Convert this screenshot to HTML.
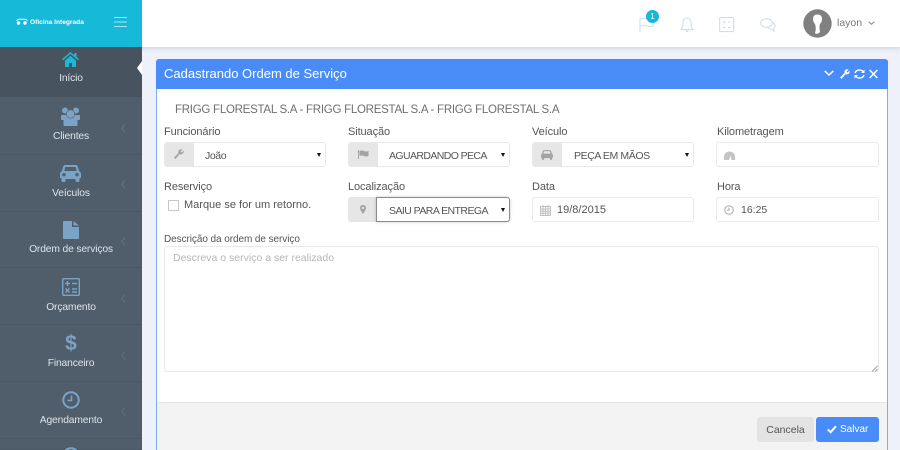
<!DOCTYPE html>
<html><head><meta charset="utf-8"><style>
*{box-sizing:border-box}
html,body{margin:0;padding:0;width:900px;height:450px;overflow:hidden;background:#eef1fa;font-family:"Liberation Sans",sans-serif;color:#555}
#p{position:relative;width:900px;height:450px;overflow:hidden;background:#eef1fa}
.a{position:absolute;white-space:nowrap}
.m{position:absolute;left:0;width:142px;background:#505e6c;border-bottom:1px solid #4a5865}
.ml{position:absolute;left:0;width:142px;text-align:center;color:#dde3e8;font-size:10.300px;letter-spacing:-.15px;white-space:nowrap}
.lab{position:absolute;font-size:11px;color:#555;letter-spacing:-.1px;white-space:nowrap}
.box{position:absolute;height:25px;background:#fff;border:1px solid #e9e9e9;border-radius:3px}
.ad{position:absolute;left:0;top:0;bottom:0;width:29px;background:#e6e6e6;border-radius:2px 0 0 2px}
.tx{position:absolute;font-size:10.500px;letter-spacing:-.4px;color:#555;white-space:nowrap}
.ar{position:absolute;width:0;height:0;border-left:2.5px solid transparent;border-right:2.5px solid transparent;border-top:4px solid #111}
svg{position:absolute;overflow:visible}
</style></head><body><div id="p">

<!-- header -->
<div class="a" style="left:0;top:0;width:900px;height:47px;background:#fff;box-shadow:0 1px 5px rgba(120,120,140,.3)"></div>

<!-- sidebar -->
<div class="a" style="left:0;top:0;width:142px;height:47px;background:#17b9d8"></div>
<svg style="left:16px;top:18px" width="12" height="8" viewBox="0 0 12 8"><path d="M.5 2.500Q3 .5 6 1.500Q9 .5 11.500 2.500" fill="none" stroke="#fff" stroke-width="1"/><circle cx="2.500" cy="5" r="1.700" fill="#fff"/><circle cx="9" cy="5" r="1.700" fill="#fff"/></svg>
<div class="a" style="left:30px;top:18px;font-size:6.600px;line-height:10px;font-weight:bold;color:#fff">Oficina Integrada</div>
<svg style="left:114px;top:17px" width="13" height="10"><path d="M0 .5H13M0 5H13M0 9.500H13" stroke="#a5e5f1" stroke-width="1"/></svg>

<div class="m" style="top:47px;height:50px;background:#47535f;border:0"></div>
<div class="m" style="top:97px;height:58px"></div>
<div class="m" style="top:155px;height:57px"></div>
<div class="m" style="top:212px;height:56px"></div>
<div class="m" style="top:268px;height:57px"></div>
<div class="m" style="top:325px;height:57px"></div>
<div class="m" style="top:382px;height:57px"></div>
<div class="m" style="top:439px;height:11px"></div>
<div class="a" style="left:137px;top:61px;width:0;height:0;border-top:7px solid transparent;border-bottom:7px solid transparent;border-right:5px solid #fff"></div>

<!-- home -->
<svg style="left:62px;top:52px" width="17" height="15" viewBox="0 0 17 15"><path d="M8.500 0L12.500 3.200V1H14.500V4.900L17 7L16 8.200L8.500 2L1 8.200L0 7Z" fill="#1cb9d6"/><path d="M3 8.500L8.500 3.800L14 8.500V15H10V11H7V15H3Z" fill="#1cb9d6"/></svg>
<div class="ml" style="top:73px">Início</div>
<!-- users -->
<svg style="left:61px;top:107px" width="20" height="19" viewBox="0 0 20 19" fill="#7ba3c6"><circle cx="4" cy="3.500" r="3"/><circle cx="15" cy="3.500" r="3"/><path d="M1 8H18Q19 8 19 9V12Q19 13 18 13H1Q0 13 0 12V9Q0 8 1 8Z"/><circle cx="9.500" cy="7" r="4.200" stroke="#505e6c" stroke-width=".6"/><path d="M4 11.500H15Q16.500 11.500 16.500 13V18Q16.500 19 15.500 19H3.500Q2.500 19 2.500 18V13Q2.500 11.500 4 11.500Z"/></svg>
<div class="ml" style="top:131px">Clientes</div>
<!-- car -->
<svg style="left:60px;top:165px" width="21" height="17" viewBox="0 0 21 17" fill="#7ba3c6"><path d="M5 0H16Q17.300 0 18 2L19 6Q21 7 21 9V13H19.500V15.500Q19.500 17 18 17H17Q15.500 17 15.500 15.500V14H5.500V15.500Q5.500 17 4 17H3Q1.500 17 1.500 15.500V13H0V9Q0 7 2 6L3 2Q3.700 0 5 0ZM5.200 2L4.400 6H16.600L15.800 2ZM4 8A1.700 1.700 0 1 0 4 11.400A1.700 1.700 0 1 0 4 8ZM17 8A1.700 1.700 0 1 0 17 11.400A1.700 1.700 0 1 0 17 8Z" fill-rule="evenodd"/></svg>
<div class="ml" style="top:188px">Veículos</div>
<!-- file -->
<svg style="left:63px;top:221px" width="16" height="18" viewBox="0 0 16 18" fill="#7ba3c6"><path d="M0 1Q0 0 1 0H9V6H16V17Q16 18 15 18H1Q0 18 0 17ZM10.500 0L16 4.500H10.500Z"/></svg>
<div class="ml" style="top:244px">Ordem de serviços</div>
<!-- calc -->
<svg style="left:62px;top:278px" width="18" height="18" viewBox="0 0 18 18" fill="none" stroke="#7ba3c6" stroke-width="1.400"><rect x=".7" y=".7" width="16.600" height="16.600" rx="1"/><path d="M3 5.500H8M5.500 3V8M10 5.500H15M3.500 10.500L7.500 14.500M7.500 10.500L3.500 14.500M10 11H15M10 14H15"/></svg>
<div class="ml" style="top:302px">Orçamento</div>
<!-- dollar -->
<div class="a" style="left:0;top:332px;width:142px;text-align:center;font-size:21px;font-weight:bold;color:#7ba3c6;line-height:24px">$</div>
<div class="ml" style="top:358px">Financeiro</div>
<!-- clock -->
<svg style="left:62px;top:391px" width="18" height="18" viewBox="0 0 18 18" fill="none" stroke="#7ba3c6"><circle cx="9" cy="9" r="7.700" stroke-width="2"/><path d="M9.500 4.500V9.500H5.500" stroke-width="1.600"/></svg>
<div class="ml" style="top:415px">Agendamento</div>
<svg style="left:62px;top:447px" width="18" height="6"><circle cx="9" cy="9" r="7.700" fill="none" stroke="#7ba3c6" stroke-width="2"/></svg>
<svg style="left:121px;top:124px" width="5" height="9" fill="none" stroke="#64717e"><path d="M4 .5L.8 4.500L4 8.500"/></svg>
<svg style="left:121px;top:180px" width="5" height="9" fill="none" stroke="#64717e"><path d="M4 .5L.8 4.500L4 8.500"/></svg>
<svg style="left:121px;top:237px" width="5" height="9" fill="none" stroke="#64717e"><path d="M4 .5L.8 4.500L4 8.500"/></svg>
<svg style="left:121px;top:294px" width="5" height="9" fill="none" stroke="#64717e"><path d="M4 .5L.8 4.500L4 8.500"/></svg>
<svg style="left:121px;top:351px" width="5" height="9" fill="none" stroke="#64717e"><path d="M4 .5L.8 4.500L4 8.500"/></svg>
<svg style="left:121px;top:407px" width="5" height="9" fill="none" stroke="#64717e"><path d="M4 .5L.8 4.500L4 8.500"/></svg>

<!-- top icons -->
<svg style="left:639px;top:17px" width="15" height="16" fill="none" stroke="#cddcec" stroke-width="1.100"><path d="M1 15.500V2Q5 .5 8 2T14 2V9Q11 10.500 8 9T1 9"/></svg>
<div class="a" style="left:646px;top:10px;width:13px;height:13px;border-radius:50%;background:#17b9d8;color:#fff;font-size:8px;line-height:13px;text-align:center">1</div>
<svg style="left:680px;top:17px" width="14" height="16" fill="none" stroke="#d3dde8" stroke-width="1.100"><path d="M7 1Q11 1 11 6Q11 10 13 12.500H1Q3 10 3 6Q3 1 7 1ZM5.500 13Q7 16 8.500 13"/></svg>
<svg style="left:719px;top:17px" width="16" height="16" fill="none" stroke="#d3dde8" stroke-width="1.100"><rect x=".6" y=".6" width="14" height="14" rx="1"/><path d="M4 5H6.500M9 5H11.500M4 10.500H6.500M9 10.500H11.500M5.200 3.800V6.200"/></svg>
<svg style="left:760px;top:18px" width="16" height="14" fill="none" stroke="#d3dde8" stroke-width="1.100"><ellipse cx="6.500" cy="5" rx="5.800" ry="4.300"/><path d="M13 4.500Q15.500 6 15 8.500Q14.500 10 13.500 10.500L14 13L11 11Q8.500 11 7.500 9.500"/></svg>
<svg style="left:803px;top:9px" width="29" height="29" viewBox="0 0 29 29"><circle cx="14.500" cy="14.500" r="14.200" fill="#808080"/><path d="M14.500 5.500Q19 5.500 19 10Q19 13 17 15Q16 17 17 23Q14 26 12 24Q13.500 19 12 15Q10 13 10 10Q10 5.500 14.500 5.500Z" fill="#fff"/></svg>
<div class="a" style="left:837px;top:17px;font-size:10.500px;color:#777">layon</div>
<svg style="left:868px;top:21px" width="7" height="5" fill="none" stroke="#888"><path d="M.7 .7L3.500 3.300L6.300 .7"/></svg>

<!-- panel -->
<div class="a" style="left:156px;top:59px;width:732px;height:400px;background:#fff;border:1px solid #7faaf5;border-radius:3px 3px 0 0"></div>
<div class="a" style="left:156px;top:59px;width:732px;height:30px;background:#4a8cf7;border-radius:3px 3px 0 0"></div>
<div class="a" style="left:164px;top:66px;font-size:13px;color:#fff;line-height:16px">Cadastrando Ordem de Serviço</div>
<svg style="left:824px;top:70px" width="10" height="7" fill="none" stroke="#fff" stroke-width="1.500"><path d="M.7 .9L5 5L9.300 .9"/></svg>
<svg style="left:840px;top:69px" width="10" height="10" fill="#fff"><path d="M0 8.500L4.500 4Q4 1.500 6 .5Q7.500 0 8.500 .5L6.500 2.500L7.500 3.500L9.700 1.500Q10 3 9 4.500Q7.500 5.800 5.500 5.200L1.500 10Z"/></svg>
<svg style="left:854px;top:69px" width="11" height="10" fill="none" stroke="#fff" stroke-width="1.400"><path d="M1 4Q2 1 5.500 1Q8 1 9.500 3M10 6Q9 9 5.500 9Q3 9 1.500 7"/><path d="M10.500 .5V4H7ZM.5 9.500V6H4Z" fill="#fff" stroke="none"/></svg>
<svg style="left:869px;top:69px" width="9" height="10" fill="none" stroke="#fff" stroke-width="1.400"><path d="M.7 1L8.300 9M8.300 1L.7 9"/></svg>

<div class="a" style="left:175px;top:103px;font-size:11.500px;letter-spacing:-.26px;color:#6f6f6f;line-height:14px">FRIGG FLORESTAL S.A - FRIGG FLORESTAL S.A - FRIGG FLORESTAL S.A</div>

<!-- row 1 -->
<div class="lab" style="left:164px;top:126px">Funcionário</div>
<div class="lab" style="left:348px;top:126px">Situação</div>
<div class="lab" style="left:532px;top:126px">Veículo</div>
<div class="lab" style="left:717px;top:126px">Kilometragem</div>

<div class="box" style="left:164px;top:142px;width:162px"><div class="ad"></div></div>
<div class="tx" style="left:205px;top:150px">João</div><div class="ar" style="left:317px;top:153px"></div>
<svg style="left:174px;top:149px" width="10" height="10" fill="#a3a3a3"><path d="M0 8.500L4.500 4Q4 1.500 6 .5Q7.500 0 8.500 .5L6.500 2.500L7.500 3.500L9.700 1.500Q10 3 9 4.500Q7.500 5.800 5.500 5.200L1.500 10Z"/></svg>

<div class="box" style="left:348px;top:142px;width:162px"><div class="ad"></div></div>
<div class="tx" style="left:389px;top:150px;letter-spacing:-.6px">AGUARDANDO PECA</div><div class="ar" style="left:501px;top:153px"></div>
<svg style="left:358px;top:150px" width="11" height="9" fill="#a3a3a3"><path d="M0 0H1V9H0ZM1.500 1Q4 0 6 1T10.500 1V6Q8 7 6 6T1.500 6Z"/></svg>

<div class="box" style="left:532px;top:142px;width:162px"><div class="ad"></div></div>
<div class="tx" style="left:574px;top:150px">PEÇA EM MÃOS</div><div class="ar" style="left:685px;top:153px"></div>
<svg style="left:541px;top:150px" width="12" height="10" viewBox="0 0 21 17" fill="#a3a3a3"><path d="M5 0H16Q17.300 0 18 2L19 6Q21 7 21 9V13H19.500V15.500Q19.500 17 18 17H17Q15.500 17 15.500 15.500V14H5.500V15.500Q5.500 17 4 17H3Q1.500 17 1.500 15.500V13H0V9Q0 7 2 6L3 2Q3.700 0 5 0ZM5.200 2L4.400 6H16.600L15.800 2Z" fill-rule="evenodd"/></svg>

<div class="box" style="left:716px;top:142px;width:163px"></div>
<svg style="left:724px;top:151px" width="11" height="9" fill="#c4c4c4"><path d="M0 9Q-1 1 5.500 .5Q12 1 11 9H7.500L6.500 4.500L5 9Z"/></svg>

<!-- row 2 -->
<div class="lab" style="left:164px;top:181px">Reserviço</div>
<div class="lab" style="left:348px;top:181px">Localização</div>
<div class="lab" style="left:532px;top:181px">Data</div>
<div class="lab" style="left:717px;top:181px">Hora</div>

<div class="a" style="left:168px;top:200px;width:11px;height:11px;border:1px solid #c8c8c8;background:#fff"></div>
<div class="lab" style="left:184px;top:199px;letter-spacing:0">Marque se for um retorno.</div>

<div class="a" style="left:348px;top:197px;width:29px;height:25px;background:#e6e6e6;border-radius:3px 0 0 3px"></div>
<div class="a" style="left:376px;top:197px;width:134px;height:25px;background:#fff;border:1px solid #8a8a8a;border-radius:0 3px 3px 0;box-shadow:0 0 3px rgba(0,0,0,.2)"></div>
<div class="tx" style="left:389px;top:205px;letter-spacing:-.55px">SAIU PARA ENTREGA</div><div class="ar" style="left:501px;top:208px"></div>
<svg style="left:360px;top:205px" width="6" height="9" fill="#a3a3a3"><path d="M3 0Q6 0 6 3Q6 5 3 9Q0 5 0 3Q0 0 3 0ZM3 1.800A1.200 1.200 0 1 0 3 4.200A1.200 1.200 0 1 0 3 1.800Z" fill-rule="evenodd"/></svg>

<div class="box" style="left:532px;top:197px;width:162px"></div>
<svg style="left:540px;top:205px" width="11" height="11" fill="none" stroke="#c0c0c0"><rect x=".5" y="1.500" width="10" height="9"/><path d="M.5 4H10.500M.5 6.300H10.500M.5 8.300H10.500M3 1.500V10.500M5.500 1.500V10.500M8 1.500V10.500M3 0V2M8 0V2"/></svg>
<div class="tx" style="left:557px;top:204px;font-size:11px;letter-spacing:0">19/8/2015</div>

<div class="box" style="left:716px;top:197px;width:163px"></div>
<svg style="left:724px;top:205px" width="10" height="10" fill="none" stroke="#aaa"><circle cx="5" cy="5" r="4.300"/><path d="M5 2.500V5.300H3"/></svg>
<div class="tx" style="left:741px;top:204px;letter-spacing:0">16:25</div>

<!-- description -->
<div class="a" style="left:164px;top:234px;font-size:10px;color:#555;letter-spacing:-.07px">Descrição da ordem de serviço</div>
<div class="a" style="left:164px;top:246px;width:715px;height:126px;background:#fff;border:1px solid #e9e9e9;border-radius:3px"></div>
<div class="a" style="left:173px;top:252px;font-size:10.500px;color:#b5b5b5">Descreva o serviço a ser realizado</div>
<svg style="left:871px;top:365px" width="7" height="7" stroke="#888" stroke-width=".8"><path d="M1 6.500L6.500 1M4 6.500L6.500 4"/></svg>

<!-- footer -->
<div class="a" style="left:157px;top:402px;width:730px;height:48px;background:#f3f3f3;border-top:1px solid #e6e6e6"></div>
<div class="a" style="left:757px;top:417px;width:57px;height:25px;background:#e3e3e3;border-radius:3px;text-align:center;font-size:10.500px;line-height:26px;color:#555">Cancela</div>
<div class="a" style="left:816px;top:417px;width:63px;height:25px;background:#4a8cf7;border-radius:3px;font-size:10px;line-height:26px;color:#fff;padding-left:24px">Salvar</div>
<svg style="left:827px;top:425px" width="10" height="9" fill="none" stroke="#fff" stroke-width="2"><path d="M.8 4.500L3.700 7.200L9 1.200"/></svg>
</div></body></html>
